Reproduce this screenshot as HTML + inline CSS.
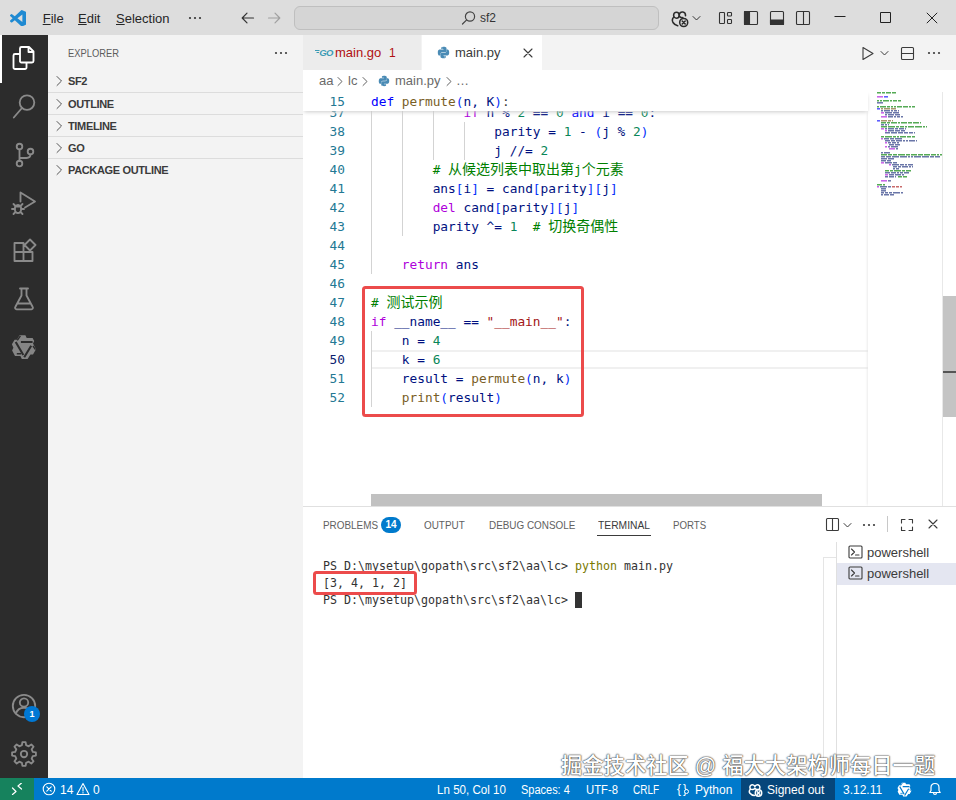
<!DOCTYPE html>
<html lang="zh">
<head>
<meta charset="utf-8">
<title>main.py - sf2</title>
<style>
*{box-sizing:border-box;margin:0;padding:0}
html,body{width:956px;height:800px;overflow:hidden;background:#fff}
body{font-family:"Liberation Sans","Noto Sans CJK SC",sans-serif;font-size:13px;color:#3b3b3b;position:relative}
.abs{position:absolute}
svg{display:block}
svg.i{position:absolute;fill:none;stroke-linecap:round;stroke-linejoin:round}
/* title bar */
#title{left:0;top:0;width:956px;height:35px;background:#dddddd}
#title .menu{position:absolute;top:10.5px;font-size:13px;color:#262626;white-space:nowrap}
#title .menu u{text-decoration-thickness:1px;text-underline-offset:1.200px}
#cmd{left:294px;top:6px;width:365px;height:24px;border:1px solid #bfbfbf;border-radius:6px;background:#d5d5d5}
/* activity bar */
#act{left:0;top:35px;width:48px;height:743px;background:#2c2c2c}
/* sidebar */
#side{left:48px;top:35px;width:255px;height:743px;background:#f3f3f3}
#side .hdr{position:absolute;left:20px;top:12px;font-size:11px;color:#5c5c5c;white-space:nowrap;transform:scaleX(.85);transform-origin:0 50%}
.sec{position:absolute;left:0;width:255px;height:22px;border-top:1px solid #dcdcdc;font-weight:bold;font-size:11px;color:#3b3b3b;white-space:nowrap}
.sec span{position:absolute;left:20px;top:5px;letter-spacing:-.35px}
/* tabs */
#tabs{left:303px;top:35px;width:653px;height:35px;background:#f3f3f3}
.tab{position:absolute;top:0;height:35px;font-size:13px;white-space:nowrap}
.tab span{position:absolute;top:10px}
/* editor */
#crumbs{left:303px;top:70px;width:653px;height:22px;background:#fff;font-size:13px;color:#6a6a6a;white-space:nowrap}
#crumbs span{position:absolute;top:3px}
#editor{left:303px;top:92px;width:653px;height:415px;background:#fff;overflow:hidden}
.code{font-family:"DejaVu Sans Mono","Liberation Mono","Noto Sans CJK SC",monospace;font-size:12.8px;white-space:pre}
.ln{position:absolute;left:0;width:42px;text-align:right;color:#237893;height:19px;line-height:19px}
.ln.cur{color:#0b216f}
.cl{position:absolute;left:68px;height:19px;line-height:19px}
.kw{color:#0000ff}.cf{color:#af00db}.fn{color:#795e26}.va{color:#001080}.nu{color:#098658}.st{color:#a31515}.cm{color:#008000}.b1{color:#0431fa}.b2{color:#319331}.b3{color:#7b3814}
.zh{font-size:14px}
.guide{position:absolute;width:1px;background:#d3d3d3}
.redbox{position:absolute;border:3.500px solid #ec4b4b;border-radius:3.500px}
/* panel */
#panel{left:303px;top:506px;width:653px;height:272px;background:#fff;border-top:1px solid #e0e0e0}
.ptab{position:absolute;top:11.500px;font-size:11px;color:#616161;white-space:nowrap;transform:scaleX(.9);transform-origin:0 50%}
.term{font-family:"DejaVu Sans Mono","Liberation Mono",monospace;font-size:11.63px;white-space:pre;color:#333;position:absolute;left:20px;height:17px;line-height:17px}
.trow{position:absolute;left:534px;width:119px;height:22px;font-size:13px;color:#3b3b3b}
.trow span{position:absolute;left:30px;top:3px}
/* status */
#status{left:0;top:778px;width:956px;height:22px;background:#007acc;color:#fff;font-size:12px}
#status .it{position:absolute;top:5px;white-space:nowrap}
#wm{left:561px;top:748px;font-size:21.300px;font-weight:500;color:#fff;white-space:nowrap;font-family:"Liberation Sans","Noto Sans CJK SC",sans-serif;text-shadow:0 0 1.500px rgba(0,0,0,.75),0 0 2px rgba(0,0,0,.45),0 0 1px rgba(0,0,0,.6)}
</style>
</head>
<body>
<div id="title" class="abs">
  <svg class="abs" style="left:9.800px;top:9.800px" width="16.500" height="16.500" viewBox="0 0 100 100"><path d="M96 11 75 1a6 6 0 0 0-7 1L29 38 12 25a4 4 0 0 0-5 0l-6 5a4 4 0 0 0 0 6l15 14L1 64a4 4 0 0 0 0 6l6 5a4 4 0 0 0 5 0l17-13 39 36a6 6 0 0 0 7 1l21-10a6 6 0 0 0 4-6V17a6 6 0 0 0-4-6zM75 73 45 50l30-23z" fill="#1f8ad2"/></svg>
  <div class="menu" style="left:42.700px"><u>F</u>ile</div>
  <div class="menu" style="left:78px"><u>E</u>dit</div>
  <div class="menu" style="left:116px"><u>S</u>election</div>
  <svg class="abs" style="left:188px;top:16px" width="14" height="4"><circle cx="2" cy="2" r="1.1" fill="#333"/><circle cx="7" cy="2" r="1.1" fill="#333"/><circle cx="12" cy="2" r="1.1" fill="#333"/></svg>
  <svg class="i" style="left:240px;top:11px" width="16" height="14" stroke="#333" stroke-width="1.2"><path d="M13.5 7H2.5M7 2.2 2.2 7 7 11.8"/></svg>
  <svg class="i" style="left:266px;top:11px" width="16" height="14" stroke="#a0a0a0" stroke-width="1.2"><path d="M2.5 7h11M9 2.2 13.8 7 9 11.800"/></svg>
  <div id="cmd" class="abs"></div>
  <svg class="i" style="left:461px;top:10px" width="16" height="16" stroke="#444" stroke-width="1.2"><circle cx="9" cy="6.500" r="4.6"/><path d="M5.700 9.800 1.500 14"/></svg>
  <div class="abs" style="left:480px;top:11px;font-size:12px;color:#333">sf2</div>
  <!-- copilot -->
  <svg class="i" style="left:671px;top:9.500px" width="20" height="18" stroke="#2b2b2b" stroke-width="1.550"><ellipse cx="5.400" cy="5.200" rx="2.800" ry="3"/><path d="M8.300 4.500c.4-1.800 2-2.600 3.600-2.400 2 .3 2.700 1.700 2.600 3.600M2.800 7C1.300 8.500 1.200 11 2 12.500c1 1.700 2.600 2.700 4.700 3.200M8.200 6c.8 1.400 2.200 1.800 3.600 1.600"/><circle cx="12.700" cy="12.500" r="4"/><path d="M11.200 11l3 3M14.200 11l-3 3"/></svg>
  <svg class="i" style="left:691.500px;top:15px" width="10" height="7" stroke="#333" stroke-width="1"><path d="M1 1.500 4.500 5 8 1.500"/></svg>
  <!-- layout icons -->
  <svg class="i" style="left:718px;top:11px" width="16" height="14" stroke="#333" stroke-width="1.1"><rect x="1.500" y="1.500" width="5" height="11" rx=".8"/><rect x="9.500" y="1.500" width="4" height="3.500" rx=".8"/><rect x="9.500" y="8.500" width="4" height="4" rx=".8"/></svg>
  <svg class="i" style="left:743px;top:10px" width="16" height="16" stroke="#333" stroke-width="1.1"><rect x="1.500" y="1.500" width="13" height="13" rx="1"/><rect x="1.500" y="1.500" width="5" height="13" fill="#333"/></svg>
  <svg class="i" style="left:769px;top:10px" width="16" height="16" stroke="#333" stroke-width="1.1"><rect x="1.500" y="1.500" width="13" height="13" rx="1"/><rect x="1.500" y="10" width="13" height="4.500" fill="#333"/></svg>
  <svg class="i" style="left:795px;top:10px" width="16" height="16" stroke="#333" stroke-width="1.1"><rect x="1.500" y="1.500" width="13" height="13" rx="1"/><path d="M8.500 1.500v13"/></svg>
  <!-- window controls -->
  <svg class="i" style="left:834px;top:10px;stroke-linecap:butt" width="12" height="12" stroke="#222" stroke-width="1"><path d="M.5 6.500h11"/></svg>
  <svg class="i" style="left:880px;top:11.500px;stroke-linecap:butt" width="12" height="12" stroke="#222" stroke-width="1"><rect x=".5" y=".5" width="10" height="10"/></svg>
  <svg class="i" style="left:926px;top:11.500px;stroke-linecap:butt" width="12" height="12" stroke="#222" stroke-width="1"><path d="M.8.800l10.400 10.400M11.200.8.800 11.200"/></svg>
</div>

<div id="act" class="abs">
  <div class="abs" style="left:0;top:0;width:2px;height:48px;background:#fff"></div>
  <!-- files -->
  <svg class="i" style="left:11px;top:9px" width="26" height="28" stroke="#fff" stroke-width="1.850"><path d="M9 17.500V4.500a1.500 1.500 0 0 1 1.500-1.500H18l4.500 4.500V17a1.500 1.500 0 0 1-1.500 1.500H10.500A1.500 1.500 0 0 1 9 17.500zM17.500 3v5h5M9 10H4a1.500 1.500 0 0 0-1.500 1.500V23.500A1.500 1.500 0 0 0 4 25h10a1.500 1.500 0 0 0 1.500-1.500V18.500"/></svg>
  <!-- search -->
  <svg class="i" style="left:11px;top:57px" width="26" height="28" stroke="#8a8a8a" stroke-width="1.850"><circle cx="16" cy="10.600" r="7.300"/><path d="M11 16 2.800 25.500"/></svg>
  <!-- scm -->
  <svg class="i" style="left:11.500px;top:106px" width="26" height="28" stroke="#8a8a8a" stroke-width="1.850"><circle cx="7.500" cy="5.500" r="2.800"/><circle cx="18.500" cy="10.500" r="2.800"/><circle cx="7.500" cy="22.500" r="2.800"/><path d="M7.500 8.300v11.400M18.500 13.300c0 2.500-1.500 3.700-4 3.700H7.500"/></svg>
  <!-- debug -->
  <svg class="i" style="left:11px;top:153px" width="26" height="28" stroke="#8a8a8a" stroke-width="1.850"><path d="M9.500 13.500V4.500L24 13.500 14 19.500"/><ellipse cx="7" cy="21" rx="3.200" ry="4"/><path d="M4.500 18 2.500 16M9.500 18l2-2M3.800 21H1M10.200 21H13M4.500 24l-2 2M9.500 24l2 2M4.500 18.500h5"/></svg>
  <!-- extensions -->
  <svg class="i" style="left:11px;top:201px" width="26" height="28" stroke="#8a8a8a" stroke-width="1.850" stroke-linejoin="miter"><path d="M3.500 8.500h9v18h-9zM3.500 17.500h18v9h-18M21.500 17.500v9M19 5l5.500 5.500L19 16l-5.500-5.500z" transform="translate(0,-1.500)"/></svg>
  <!-- testing -->
  <svg class="i" style="left:11px;top:249px" width="26" height="28" stroke="#8a8a8a" stroke-width="1.850"><path d="M9 4.500h8M10.500 4.500v7L4.300 23a1.500 1.500 0 0 0 1.400 2.300H20.300A1.500 1.500 0 0 0 21.700 23L15.500 11.500v-7M6.500 19.500h13"/></svg>
  <!-- knot -->
  <svg class="abs" style="left:6px;top:293px" width="36" height="36" viewBox="0 0 36 36"><path d="M13.500 7.200h5.900l1.300 2.900h5.900l1.600 3-1.200 2.400 3 5.700-3 5.400h-2.500l-2.900 4.500h-5.800l-1.400-3.200H9l-2.900-5.400 1.300-2.700-1.500-3.600 2.700-4.500H11z" fill="#858585"/><path d="M14.900 14h11.700M9.700 14l7.600 13M25.200 17.800l-7 11.500" stroke="#2c2c2c" stroke-width="2.100" fill="none"/><path d="M11.300 12.400l3.100-4.500M10.800 25.700h4.300M27 18l2.500 3.600" stroke="#2c2c2c" stroke-width="1.400" fill="none"/></svg>
  <!-- account -->
  <svg class="i" style="left:11px;top:658px" width="26" height="26" stroke="#8a8a8a" stroke-width="1.850"><circle cx="13" cy="13" r="11.200"/><circle cx="13" cy="9.500" r="4.200"/><path d="M4.800 20.500c1.500-3.800 4.500-5.800 8.200-5.800s6.700 2 8.200 5.800"/></svg>
  <div class="abs" style="left:24px;top:671px;width:16px;height:16px;border-radius:8px;background:#0078d4;color:#fff;font-size:9px;font-weight:bold;text-align:center;line-height:16px">1</div>
  <!-- gear -->
  <svg class="i" style="left:11px;top:706px" width="26" height="26" stroke="#8a8a8a" stroke-width="1.850"><circle cx="13" cy="13" r="3.2"/><path d="M10.9 4.2L11.4 1.1L14.6 1.1L15.1 4.2L17.7 5.3L20.3 3.5L22.5 5.7L20.7 8.3L21.8 10.9L24.9 11.4L24.9 14.6L21.8 15.1L20.7 17.7L22.5 20.3L20.3 22.5L17.7 20.7L15.1 21.8L14.6 24.9L11.4 24.9L10.9 21.8L8.3 20.7L5.7 22.5L3.5 20.3L5.3 17.7L4.2 15.1L1.1 14.6L1.1 11.4L4.2 10.9L5.3 8.3L3.5 5.7L5.7 3.5L8.3 5.3z"/></svg>
</div>

<div id="side" class="abs">
  <div class="hdr">EXPLORER</div>
  <svg class="abs" style="left:226px;top:16px" width="14" height="4"><circle cx="2" cy="2" r="1.100" fill="#3b3b3b"/><circle cx="7" cy="2" r="1.100" fill="#3b3b3b"/><circle cx="12" cy="2" r="1.100" fill="#3b3b3b"/></svg>
  <div class="sec" style="top:35px;border-top:none"><svg class="i" style="left:6px;top:5px" width="10" height="12" stroke="#555" stroke-width="1"><path d="M3 1.500 7.500 6 3 10.500"/></svg><span>SF2</span></div>
  <div class="sec" style="top:57px"><svg class="i" style="left:6px;top:5px" width="10" height="12" stroke="#555" stroke-width="1"><path d="M3 1.500 7.500 6 3 10.500"/></svg><span>OUTLINE</span></div>
  <div class="sec" style="top:79px"><svg class="i" style="left:6px;top:5px" width="10" height="12" stroke="#555" stroke-width="1"><path d="M3 1.500 7.500 6 3 10.500"/></svg><span>TIMELINE</span></div>
  <div class="sec" style="top:101px"><svg class="i" style="left:6px;top:5px" width="10" height="12" stroke="#555" stroke-width="1"><path d="M3 1.500 7.500 6 3 10.500"/></svg><span>GO</span></div>
  <div class="sec" style="top:123px"><svg class="i" style="left:6px;top:5px" width="10" height="12" stroke="#555" stroke-width="1"><path d="M3 1.500 7.500 6 3 10.500"/></svg><span>PACKAGE OUTLINE</span></div>
</div>

<div id="tabs" class="abs">
  <div class="tab" style="left:0;width:119px;background:#ececec;border-right:1px solid #f3f3f3">
    <svg class="abs" style="left:10px;top:12px" width="22" height="11" viewBox="0 0 22 11"><text x="6.300" y="9" font-family="Liberation Sans, sans-serif" font-size="9.500" font-weight="bold" font-style="italic" fill="#3a9bb5" letter-spacing="-.7">GO</text><path d="M2 3.500h4.500M3.500 5.500h2.500" stroke="#3a9bb5" stroke-width="1"/></svg>
    <span style="left:32px;color:#b01011">main.go</span><span style="left:86px;color:#b01011;font-size:12px;top:11px">1</span>
  </div>
  <div class="tab" style="left:119px;width:120px;background:#fff">
    <svg class="abs" style="left:14.500px;top:11px" width="13" height="13" viewBox="0 0 16 16"><path d="M7.900 1C5 1 5.200 2.300 5.200 2.300v1.400H8v.5H3.500S1 3.900 1 7.900s2.100 3.800 2.100 3.800h1.300V9.800s-.1-2.100 2.100-2.100h3.200s2 0 2-1.900V2.900S12 1 7.900 1zM6.400 2c.3 0 .5.200.5.500s-.2.500-.5.500-.5-.2-.5-.5.200-.5.500-.5z" fill="#4a8bb5"/><path d="M8.100 15c2.900 0 2.700-1.300 2.700-1.300v-1.400H8v-.5h4.500s2.500.3 2.500-3.700-2.100-3.800-2.100-3.800h-1.300v1.900s.1 2.100-2.100 2.100H6.300s-2 0-2 1.900v2.900S4 15 8.100 15zm1.500-1c-.3 0-.5-.2-.5-.5s.2-.5.500-.5.500.2.500.5-.2.500-.5.500z" fill="#4a8bb5"/></svg>
    <span style="left:33px;color:#3b3b3b">main.py</span>
    <svg class="i" style="left:101px;top:13px" width="10" height="10" stroke="#3b3b3b" stroke-width="1.100"><path d="M1 1l8 8M9 1 1 9"/></svg>
  </div>
  <svg class="i" style="left:558px;top:11px" width="14" height="15" stroke="#3b3b3b" stroke-width="1.100"><path d="M2 1.500v12L12 7.500z"/></svg>
  <svg class="i" style="left:577px;top:15px" width="10" height="7" stroke="#3b3b3b" stroke-width="1"><path d="M1 1.500 4.500 5 8 1.500"/></svg>
  <svg class="i" style="left:597px;top:11px" width="15" height="15" stroke="#3b3b3b" stroke-width="1.100"><rect x="1.500" y="1.500" width="12" height="12" rx="1"/><path d="M1.500 7.500h12"/></svg>
  <svg class="abs" style="left:624px;top:16px" width="14" height="4"><circle cx="2" cy="2" r="1.100" fill="#3b3b3b"/><circle cx="7" cy="2" r="1.100" fill="#3b3b3b"/><circle cx="12" cy="2" r="1.100" fill="#3b3b3b"/></svg>
</div>

<div id="crumbs" class="abs">
  <span style="left:16px">aa</span>
  <svg class="i" style="left:33px;top:6px" width="8" height="11" stroke="#616161" stroke-width="1"><path d="M2 1.500 6 5.500 2 9.500"/></svg>
  <span style="left:45px">lc</span>
  <svg class="i" style="left:58px;top:6px" width="8" height="11" stroke="#616161" stroke-width="1"><path d="M2 1.500 6 5.500 2 9.500"/></svg>
  <svg class="abs" style="left:75px;top:5px" width="12" height="12" viewBox="0 0 16 16"><path d="M7.900 1C5 1 5.200 2.300 5.200 2.300v1.400H8v.5H3.500S1 3.900 1 7.900s2.100 3.800 2.100 3.800h1.300V9.800s-.1-2.100 2.100-2.100h3.200s2 0 2-1.900V2.900S12 1 7.900 1z" fill="#4a8bb5"/><path d="M8.100 15c2.900 0 2.700-1.300 2.700-1.300v-1.400H8v-.5h4.500s2.500.3 2.500-3.700-2.100-3.800-2.100-3.800h-1.300v1.900s.1 2.100-2.100 2.100H6.300s-2 0-2 1.900v2.900S4 15 8.100 15z" fill="#4a8bb5"/></svg>
  <span style="left:92px">main.py</span>
  <svg class="i" style="left:142px;top:6px" width="8" height="11" stroke="#616161" stroke-width="1"><path d="M2 1.500 6 5.500 2 9.500"/></svg>
  <span style="left:153px;letter-spacing:-1px">…</span>
</div>

<div id="editor" class="abs">
  <!-- current line highlight -->
  <div class="abs" style="left:68px;top:258px;width:497px;height:19px;border-top:2px solid #f0f0f0;border-bottom:2px solid #f0f0f0"></div>
  <!-- indent guides -->
  <div class="guide" style="left:68px;top:11px;height:171px"></div>
  <div class="guide" style="left:99px;top:11px;height:133px"></div>
  <div class="guide" style="left:130px;top:11px;height:57px"></div>
  <div class="guide" style="left:161px;top:30px;height:38px"></div>
  <div class="guide" style="left:68px;top:239px;height:76px"></div>
<div class="ln code" style="top:11px">37</div><div class="cl code va" style="top:11px">            <span class="cf">if</span> n % <span class="nu">2</span> == <span class="nu">0</span> <span class="kw">and</span> i == <span class="nu">0</span>:</div>
<div class="ln code" style="top:30px">38</div><div class="cl code va" style="top:30px">                parity = <span class="nu">1</span> - <span class="b1">(</span>j % <span class="nu">2</span><span class="b1">)</span></div>
<div class="ln code" style="top:49px">39</div><div class="cl code va" style="top:49px">                j //= <span class="nu">2</span></div>
<div class="ln code" style="top:68px">40</div><div class="cl code va" style="top:68px">        <span class="cm"># <span class="zh">从候选列表中取出第</span>j<span class="zh">个元素</span></span></div>
<div class="ln code" style="top:87px">41</div><div class="cl code va" style="top:87px">        ans<span class="b1">[</span>i<span class="b1">]</span> = cand<span class="b1">[</span>parity<span class="b1">]</span><span class="b1">[</span>j<span class="b1">]</span></div>
<div class="ln code" style="top:106px">42</div><div class="cl code va" style="top:106px">        <span class="cf">del</span> cand<span class="b1">[</span>parity<span class="b1">]</span><span class="b1">[</span>j<span class="b1">]</span></div>
<div class="ln code" style="top:125px">43</div><div class="cl code va" style="top:125px">        parity ^= <span class="nu">1</span>  <span class="cm"># <span class="zh">切换奇偶性</span></span></div>
<div class="ln code" style="top:144px">44</div><div class="cl code va" style="top:144px"></div>
<div class="ln code" style="top:163px">45</div><div class="cl code va" style="top:163px">    <span class="cf">return</span> ans</div>
<div class="ln code" style="top:182px">46</div><div class="cl code va" style="top:182px"></div>
<div class="ln code" style="top:201px">47</div><div class="cl code va" style="top:201px"><span class="cm"># <span class="zh">测试示例</span></span></div>
<div class="ln code" style="top:220px">48</div><div class="cl code va" style="top:220px"><span class="cf">if</span> __name__ == <span class="st">"__main__"</span>:</div>
<div class="ln code" style="top:239px">49</div><div class="cl code va" style="top:239px">    n = <span class="nu">4</span></div>
<div class="ln code cur" style="top:258px">50</div><div class="cl code va" style="top:258px">    k = <span class="nu">6</span></div>
<div class="ln code" style="top:277px">51</div><div class="cl code va" style="top:277px">    result = <span class="fn">permute</span><span class="b1">(</span>n, k<span class="b1">)</span></div>
<div class="ln code" style="top:296px">52</div><div class="cl code va" style="top:296px">    <span class="fn">print</span><span class="b1">(</span>result<span class="b1">)</span></div>
  <!-- minimap -->
  <div class="abs" style="left:565px;top:0;width:74px;height:415px;background:#fff;box-shadow:-2px 0 3px -2px #ddd"></div>
<svg class="abs" style="left:574px;top:0" width="68" height="104" viewBox="0 0 68 104"><path d="M0 0.8h19" stroke="#55aa55" stroke-width="1.5" stroke-dasharray="4 1 3 1 5 1 7 1"/><path d="M0 4.8h6" stroke="#c85fe8" stroke-width="1.5"/><path d="M7 4.8h4" stroke="#5555ff" stroke-width="1.5"/><path d="M0 8.8h24" stroke="#55aa55" stroke-width="1.5" stroke-dasharray="2 1 2 1 6 1 2 1 4 1 6 1"/><path d="M0 10.8h6" stroke="#6a76a8" stroke-width="1.5"/><path d="M0 14.8h39" stroke="#55aa55" stroke-width="1.5" stroke-dasharray="2 1 6 1 3 1 2 1 2 1 5 1 5 1 2 1 3 1"/><path d="M0 16.8h3" stroke="#5555ff" stroke-width="1.5"/><path d="M4 16.8h15" stroke="#a8966e" stroke-width="1.5" stroke-dasharray="2 1 6 1 5 1"/><path d="M4 18.8h18" stroke="#6a76a8" stroke-width="1.5" stroke-dasharray="2 1 6 1 2 1 3 1 7 1"/><path d="M4 20.8h3" stroke="#c85fe8" stroke-width="1.5"/><path d="M8 20.8h14" stroke="#6a76a8" stroke-width="1.5" stroke-dasharray="7 1 6 1"/><path d="M8 22.8h15" stroke="#6a76a8" stroke-width="1.5" stroke-dasharray="2 1 6 1 6 1"/><path d="M4 24.8h6" stroke="#c85fe8" stroke-width="1.5"/><path d="M11 24.8h15" stroke="#6a76a8" stroke-width="1.5" stroke-dasharray="5 1 2 1 3 1 2 1"/><path d="M0 28.8h3" stroke="#5555ff" stroke-width="1.5"/><path d="M4 28.8h12" stroke="#a8966e" stroke-width="1.5" stroke-dasharray="6 1 3 1 4 1"/><path d="M4 30.8h40" stroke="#55aa55" stroke-width="1.5" stroke-dasharray="5 1 3 1 6 1 2 1 6 1 4 1 6 1 7 1"/><path d="M4 32.8h8" stroke="#6a76a8" stroke-width="1.5" stroke-dasharray="3 1 2 1 6 1"/><path d="M4 34.8h46" stroke="#55aa55" stroke-width="1.5" stroke-dasharray="6 1 7 1 3 1 4 1 2 1 6 1 7 1 2 1 6 1"/><path d="M4 36.8h3" stroke="#c85fe8" stroke-width="1.5"/><path d="M8 36.8h21" stroke="#6a76a8" stroke-width="1.5" stroke-dasharray="2 1 6 1 3 1 5 1 7 1"/><path d="M8 38.8h2" stroke="#c85fe8" stroke-width="1.5"/><path d="M11 38.8h17" stroke="#6a76a8" stroke-width="1.5" stroke-dasharray="6 1 5 1 4 1"/><path d="M8 40.8h30" stroke="#6a76a8" stroke-width="1.5" stroke-dasharray="5 1 6 1 5 1 4 1 4 1 3 1"/><path d="M4 44.8h34" stroke="#55aa55" stroke-width="1.5" stroke-dasharray="3 1 7 1 3 1 2 1 6 1 4 1 6 1"/><path d="M4 46.8h2" stroke="#c85fe8" stroke-width="1.5"/><path d="M7 46.8h19" stroke="#6a76a8" stroke-width="1.5" stroke-dasharray="5 1 4 1 7 1"/><path d="M8 48.8h32" stroke="#6a76a8" stroke-width="1.5" stroke-dasharray="5 1 4 1 6 1 2 1 2 1 6 1 5 1"/><path d="M8 50.8h2" stroke="#c85fe8" stroke-width="1.5"/><path d="M11 50.8h11" stroke="#6a76a8" stroke-width="1.5" stroke-dasharray="3 1 4 1 3 1"/><path d="M12 52.8h11" stroke="#6a76a8" stroke-width="1.5" stroke-dasharray="5 1 5 1"/><path d="M8 54.8h2" stroke="#c85fe8" stroke-width="1.5"/><path d="M11 54.8h10" stroke="#6a76a8" stroke-width="1.5" stroke-dasharray="2 1 7 1"/><path d="M12 56.8h6" stroke="#c85fe8" stroke-width="1.5"/><path d="M19 56.8h2" stroke="#6a76a8" stroke-width="1.5"/><path d="M4 60.8h9" stroke="#6a76a8" stroke-width="1.5" stroke-dasharray="2 1 6 1"/><path d="M4 62.8h61" stroke="#55aa55" stroke-width="1.5" stroke-dasharray="6 1 4 1 4 1 7 1 4 1 6 1 5 1 6 1 5 1 2 1 2 1"/><path d="M4 64.8h59" stroke="#6a76a8" stroke-width="1.5" stroke-dasharray="4 1 5 1 7 1 7 1 2 1 2 1 7 1 7 1 4 1 7 1"/><path d="M4 66.8h13" stroke="#6a76a8" stroke-width="1.5" stroke-dasharray="6 1 7 1"/><path d="M4 68.8h10" stroke="#6a76a8" stroke-width="1.5" stroke-dasharray="5 1 4 1"/><path d="M4 70.8h3" stroke="#c85fe8" stroke-width="1.5"/><path d="M8 70.8h12" stroke="#6a76a8" stroke-width="1.5" stroke-dasharray="7 1 5 1"/><path d="M12 72.8h2" stroke="#c85fe8" stroke-width="1.5"/><path d="M15 72.8h22" stroke="#6a76a8" stroke-width="1.5" stroke-dasharray="7 1 4 1 2 1 5 1"/><path d="M16 74.8h20" stroke="#6a76a8" stroke-width="1.5" stroke-dasharray="4 1 3 1 6 1 2 1 5 1"/><path d="M16 76.8h7" stroke="#6a76a8" stroke-width="1.5" stroke-dasharray="2 1 3 1"/><path d="M8 78.8h27" stroke="#55aa55" stroke-width="1.5" stroke-dasharray="4 1 3 1 7 1 3 1 5 1"/><path d="M8 80.8h24" stroke="#6a76a8" stroke-width="1.5" stroke-dasharray="5 1 5 1 2 1 3 1 5 1"/><path d="M8 82.8h3" stroke="#c85fe8" stroke-width="1.5"/><path d="M12 82.8h15" stroke="#6a76a8" stroke-width="1.5" stroke-dasharray="5 1 6 1 4 1"/><path d="M8 84.8h11" stroke="#6a76a8" stroke-width="1.5" stroke-dasharray="3 1 5 1 6 1"/><path d="M21 84.8h9" stroke="#55aa55" stroke-width="1.5" stroke-dasharray="4 1 7 1"/><path d="M4 88.8h6" stroke="#c85fe8" stroke-width="1.5"/><path d="M11 88.8h3" stroke="#6a76a8" stroke-width="1.5"/><path d="M0 92.8h8" stroke="#55aa55" stroke-width="1.5" stroke-dasharray="5 1 4 1"/><path d="M0 94.8h2" stroke="#c85fe8" stroke-width="1.5"/><path d="M3 94.8h11" stroke="#6a76a8" stroke-width="1.5" stroke-dasharray="7 1 5 1"/><path d="M15 94.8h10" stroke="#c96a6a" stroke-width="1.5" stroke-dasharray="3 1 3 1 2 1"/><path d="M4 96.8h5" stroke="#6a76a8" stroke-width="1.5"/><path d="M4 98.8h5" stroke="#6a76a8" stroke-width="1.5"/><path d="M4 100.8h22" stroke="#6a76a8" stroke-width="1.5" stroke-dasharray="3 1 3 1 3 1 7 1 3 1"/><path d="M4 102.8h13" stroke="#6a76a8" stroke-width="1.5" stroke-dasharray="2 1 5 1 6 1"/></svg>
  <!-- sticky scroll -->
  <div class="abs" style="left:0;top:0;width:565px;height:19px;background:#fff;box-shadow:0 2px 4px -1px #ccc"></div>
  <div class="ln code" style="top:0">15</div>
  <div class="cl code va" style="top:0"><span class="kw">def</span> <span class="fn">permute</span><span class="b1">(</span>n, K<span class="b1">)</span><span style="color:#3b3b3b">:</span></div>
  <!-- v scrollbar -->
  <div class="abs" style="left:639px;top:0;width:1px;height:415px;background:#e8e8e8"></div>
  <div class="abs" style="left:640px;top:204px;width:13px;height:121px;background:#c4c4c4"></div>
  <div class="abs" style="left:640px;top:279px;width:13px;height:2px;background:#555"></div>
  <!-- h scrollbar -->
  <div class="abs" style="left:68px;top:402px;width:451px;height:12px;background:#c1c1c1"></div>
  <div class="redbox" style="left:59px;top:194px;width:222px;height:130.500px"></div>
</div>

<div id="panel" class="abs">
  <div class="ptab" style="left:20px">PROBLEMS</div>
  <div class="abs" style="left:78px;top:10px;width:20px;height:16px;border-radius:8px;background:#007acc;color:#fff;font-size:10px;font-weight:bold;text-align:center;line-height:16px">14</div>
  <div class="ptab" style="left:120.500px">OUTPUT</div>
  <div class="ptab" style="left:185.700px">DEBUG CONSOLE</div>
  <div class="ptab" style="left:295px;color:#3b3b3b;transform:scaleX(.935)">TERMINAL</div>
  <div class="abs" style="left:293.500px;top:28px;width:54.500px;height:1px;background:#3b3b3b"></div>
  <div class="ptab" style="left:370px;transform:scaleX(.88)">PORTS</div>
  <!-- panel actions -->
  <svg class="i" style="left:522px;top:10px" width="15" height="15" stroke="#3b3b3b" stroke-width="1.100"><rect x="1.500" y="1.500" width="12" height="12" rx="1"/><path d="M7.500 1.500v12"/></svg>
  <svg class="i" style="left:540px;top:14.500px" width="10" height="7" stroke="#3b3b3b" stroke-width="1"><path d="M1 1.500 4.500 5 8 1.500"/></svg>
  <svg class="abs" style="left:559px;top:15.500px" width="14" height="4"><circle cx="2" cy="2" r="1.100" fill="#3b3b3b"/><circle cx="7" cy="2" r="1.100" fill="#3b3b3b"/><circle cx="12" cy="2" r="1.100" fill="#3b3b3b"/></svg>
  <div class="abs" style="left:584px;top:9px;width:1px;height:16px;background:#c8c8c8"></div>
  <svg class="i" style="left:597px;top:10.500px" width="14" height="14" stroke="#3b3b3b" stroke-width="1.100"><path d="M1.500 5V1.500H5M9 1.500h3.500V5M12.500 9v3.500H9M5 12.500H1.500V9"/></svg>
  <svg class="i" style="left:624px;top:11px" width="12" height="12" stroke="#3b3b3b" stroke-width="1.100"><path d="M2 2l8 8M10 2l-8 8"/></svg>
  <!-- terminal -->
  <div class="term" style="top:51px">PS D:\mysetup\gopath\src\sf2\aa\lc&gt; <span style="color:#7a7a00">python</span> main.py</div>
  <div class="term" style="top:68px">[3, 4, 1, 2]</div>
  <div class="term" style="top:85px">PS D:\mysetup\gopath\src\sf2\aa\lc&gt; </div>
  <div class="abs" style="left:271.500px;top:85px;width:7px;height:16px;background:#333"></div>
  <div class="redbox" style="left:10px;top:64px;width:104px;height:23.500px"></div>
  <!-- terminal list -->
  <div class="abs" style="left:519.500px;top:50px;width:1px;height:222px;background:#e5e5e5"></div><div class="abs" style="left:519.500px;top:50px;width:14px;height:1px;background:#e5e5e5"></div>
  <div class="abs" style="left:533px;top:35px;width:1px;height:237px;background:#e0e0e0"></div>
  <div class="trow" style="top:35px"><svg class="i" style="left:11px;top:3px" width="15" height="14" stroke="#3b3b3b" stroke-width="1.100"><rect x="1" y="1" width="13" height="12" rx="1"/><path d="M3.500 4 6.500 7 3.500 10M7.500 10h3.500"/></svg><span>powershell</span></div>
  <div class="trow" style="top:56px;height:21.500px;background:#e4e6f1"><svg class="i" style="left:11px;top:3px" width="15" height="14" stroke="#3b3b3b" stroke-width="1.100"><rect x="1" y="1" width="13" height="12" rx="1"/><path d="M3.500 4 6.500 7 3.500 10M7.500 10h3.500"/></svg><span>powershell</span></div>
</div>

<div id="wm" class="abs">掘金技术社区 @ 福大大架构师每日一题</div>

<div id="status" class="abs">
  <div class="abs" style="left:0;top:0;width:34px;height:22px;background:#16825d"></div>
  <svg class="i" style="left:11px;top:5px" width="12" height="12" stroke="#fff" stroke-width="1.200"><path d="M1.500 5.500 5 9 1.500 12M10.500 .5 7 3.500 10.500 6.500" transform="translate(0,-.5)"/></svg>
  <svg class="i" style="left:42px;top:4px" width="14" height="14" stroke="#fff" stroke-width="1.100"><circle cx="7" cy="7" r="5.800"/><path d="M4.800 4.800l4.400 4.400M9.200 4.800 4.800 9.200"/></svg>
  <div class="it" style="left:60px">14</div>
  <svg class="i" style="left:76px;top:4px" width="14" height="14" stroke="#fff" stroke-width="1.100"><path d="M7 1.500 13 12.500H1z"/><path d="M7 5.500v3.500M7 10.600v.3"/></svg>
  <div class="it" style="left:93px">0</div>
  <div class="it" style="left:436.500px;transform:scaleX(.967);transform-origin:0 50%">Ln 50, Col 10</div>
  <div class="it" style="left:520.500px;transform:scaleX(.915);transform-origin:0 50%">Spaces: 4</div>
  <div class="it" style="left:585.500px;transform:scaleX(.94);transform-origin:0 50%">UTF-8</div>
  <div class="it" style="left:633px;transform:scaleX(.83);transform-origin:0 50%">CRLF</div>
  <div class="it" style="left:677px;font-size:12px;top:4px;letter-spacing:2px">{}</div><div class="abs" style="left:684px;top:11px;width:5px;height:5px;border-radius:3px;border:1px solid #fff;background:#007acc"></div>
  <div class="it" style="left:695px">Python</div>
  <div class="abs" style="left:741px;top:0;width:94px;height:22px;background:#06467a"></div>
  <svg class="i" style="left:748px;top:4.500px" width="16" height="14" stroke="#fff" stroke-width="1.500"><path d="M2.500 6C1.500 4.800 1.700 2.600 3.300 2c1.600-.5 3.200.2 3.600 1.600.4-1.400 2-2.100 3.600-1.600 1.600.6 1.800 2.800.8 4M2.500 6c1.200 1 3.600.8 4.400-.8M11.300 6c-1.200 1-3.600.8-4.400-.8M2.500 6C1.300 7.200 1.300 9.200 1.700 10c1.200 1.600 3.200 2.400 4.800 2.400"/><circle cx="10.500" cy="10" r="3.200"/><path d="M9.300 8.800l2.400 2.400M11.700 8.800 9.300 11.200"/></svg>
  <div class="it" style="left:767px">Signed out</div>
  <div class="it" style="left:843px">3.12.11</div>
  <svg class="abs" style="left:896.500px;top:3.500px" width="15" height="15" viewBox="5 6 26 26"><path d="M13.500 7.200h5.900l1.300 2.900h5.900l1.600 3-1.200 2.400 3 5.700-3 5.400h-2.500l-2.900 4.500h-5.800l-1.400-3.200H9l-2.900-5.400 1.300-2.700-1.500-3.600 2.700-4.500H11z" fill="#fff"/><path d="M14.900 14h11.700M9.700 14l7.600 13M25.200 17.800l-7 11.500" stroke="#007acc" stroke-width="2" fill="none"/><path d="M11.300 12.400l3.100-4.500M10.800 25.700h4.300M27 18l2.500 3.600" stroke="#007acc" stroke-width="1.300" fill="none"/></svg>
  <svg class="i" style="left:927.500px;top:4px" width="14" height="14" stroke="#fff" stroke-width="1.200"><path d="M7 1.500c-2.500 0-4 1.800-4 4v3L1.800 10.500h10.400L11 8.500v-3c0-2.200-1.500-4-4-4zM5.500 10.800c0 1 .6 1.700 1.500 1.700s1.500-.7 1.500-1.700"/></svg>
</div>
</body>
</html>
